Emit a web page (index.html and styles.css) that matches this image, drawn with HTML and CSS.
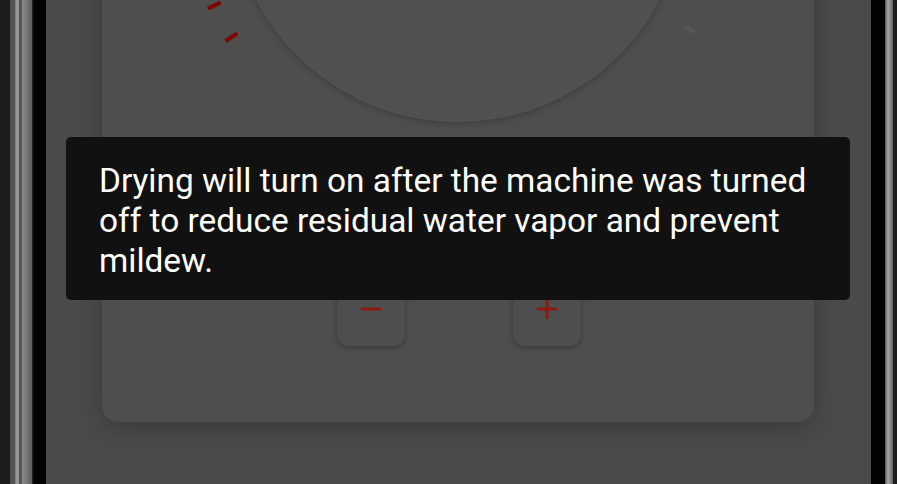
FILE: index.html
```html
<!DOCTYPE html>
<html lang="en">
<head>
<meta charset="utf-8">
<title>Drying</title>
<link rel="stylesheet" href="styles.css">
</head>
<body>
<div class="device">
  <div class="bezel bezel-left"></div>
  <div class="screen">
    <div class="card">
      <div class="dial-wrap">
        <div class="dial"></div>
        <svg class="ticks" viewBox="-300 -300 600 600" width="600" height="600" aria-hidden="true">
          <g stroke-width="4" stroke-linecap="butt">
            <line class="tick-on" x1="261" y1="0" x2="275" y2="0" transform="rotate(155.4)"/>
            <line class="tick-on" x1="261" y1="0" x2="275" y2="0" transform="rotate(147.7)"/>
            <line class="tick-off" x1="262" y1="0" x2="274" y2="0" transform="rotate(30.3)"/>
          </g>
        </svg>
      </div>
      <div class="controls">
        <button class="step" type="button" aria-label="Decrease">
          <svg width="22" height="22" viewBox="0 0 22 22"><path d="M1 11h20" class="glyph"/></svg>
        </button>
        <button class="step" type="button" aria-label="Increase">
          <svg width="22" height="22" viewBox="0 0 22 22"><path d="M1 11h20M11 1v20" class="glyph"/></svg>
        </button>
      </div>
    </div>
    <div class="tooltip">Drying will turn on after the machine was turned off to reduce residual water vapor and prevent mildew.</div>
  </div>
  <div class="bezel bezel-right"></div>
</div>
</body>
</html>
```

FILE: styles.css
```css
html, body {
  margin: 0;
  padding: 0;
  height: 100%;
  background: #1c1c1c;
  overflow: hidden;
}

.device {
  display: flex;
  height: 484px;
  width: 897px;
}

.bezel-left {
  width: 46px;
  flex: none;
  background: linear-gradient(to right,
    #1c1c1c 0, #1c1c1c 10px,
    #4e4e4e 10px, #555 15px,
    #707070 15px, #a2a2a2 17px, #8a8a8a 19px,
    #555 19px, #5a5a5a 22px,
    #8c8c8c 22px, #7a7a7a 26px, #5c5c5c 32px,
    #2a2a2a 32px, #050505 34px, #000 46px);
}

.bezel-right {
  width: 26px;
  flex: none;
  background: linear-gradient(to right,
    #000 0, #030303 14px,
    #555 14px, #a8a8a8 17px, #8a8a8a 19px, #666 22px,
    #1c1c1c 22px, #1c1c1c 26px);
}

.screen {
  position: relative;
  width: 825px;
  flex: none;
  background: #4a4a4a;
  overflow: hidden;
}

.card {
  margin: -360px 57px 0 56px;
  height: 782px;
  background: #4e4e4e;
  border-radius: 16px;
  box-shadow: 0 6px 22px rgba(0, 0, 0, 0.22);
  display: flex;
  flex-direction: column;
  align-items: center;
  box-sizing: border-box;
  padding-top: 26px;
}

.dial-wrap {
  position: relative;
  width: 456px;
  height: 456px;
}

.dial {
  width: 456px;
  height: 456px;
  border-radius: 50%;
  background: #505050;
  box-shadow: 0 2px 6px rgba(0, 0, 0, 0.22), inset 0 -1px 2px rgba(255,255,255,0.03);
}

.ticks {
  position: absolute;
  left: -72px;
  top: -72px;
}

.tick-on {
  stroke: #7e0202;
}

.tick-off {
  stroke: #575757;
}

.controls {
  margin-top: 156px;
  display: flex;
  gap: 108px;
  padding-left: 2px;
}

.step {
  width: 68px;
  height: 68px;
  border: none;
  border-radius: 11px;
  background: #4e4e4e;
  box-shadow: 0 2px 5px rgba(0, 0, 0, 0.28);
  display: flex;
  align-items: flex-end;
  justify-content: center;
  padding: 0 0 26px;
  box-sizing: border-box;
}

.glyph {
  stroke: #8a1a12;
  stroke-width: 3;
  fill: none;
}

.tooltip {
  position: absolute;
  left: 20px;
  top: 137px;
  width: 784px;
  height: 163px;
  box-sizing: border-box;
  padding: 24px 33px 20px;
  background: #111111;
  border-radius: 5px;
  color: #ffffff;
  font-family: Roboto, "Noto Sans", sans-serif;
  font-size: 33.4px;
  line-height: 40px;
}
```
